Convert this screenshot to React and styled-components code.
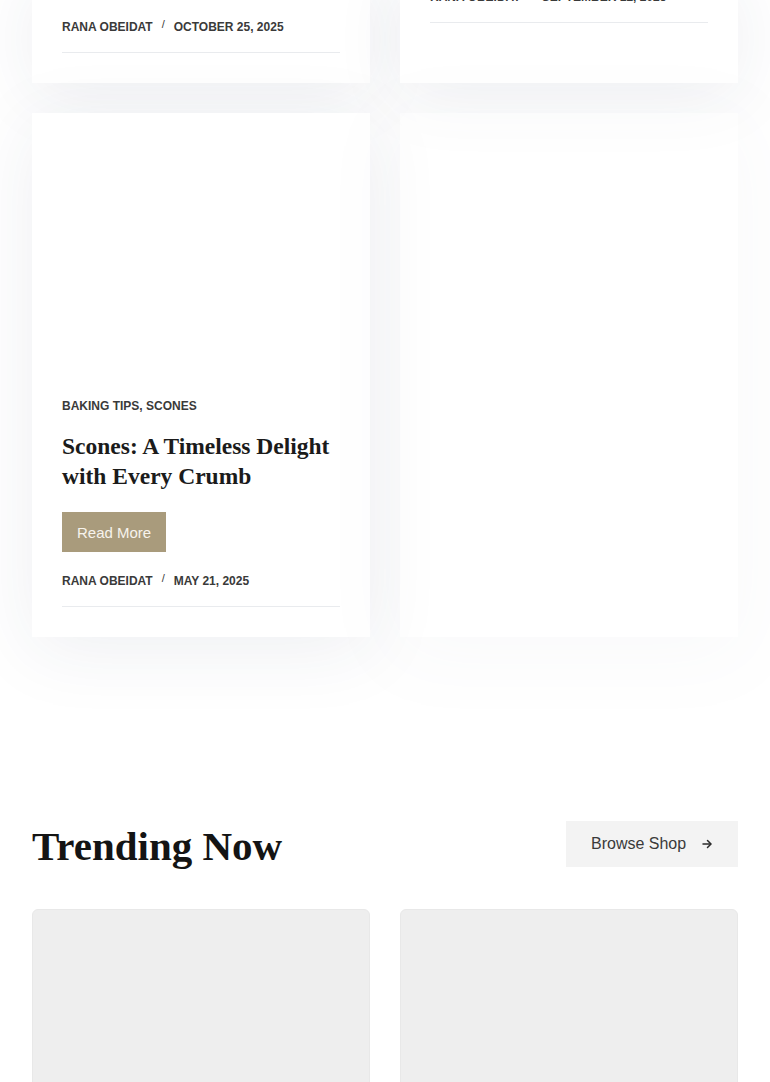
import styled, { createGlobalStyle } from "styled-components"

const Global = createGlobalStyle`
  html, body {
    margin: 0;
    padding: 0;
    background: #ffffff;
    font-family: "Liberation Sans", Arial, sans-serif;
    overflow: hidden;
  }
`

const Page = styled.div`
  width: 770px;
  height: 1082px;
  overflow: hidden;
`

const Inner = styled.div`
  padding: 0 32px;
  margin-top: -29px;
`

const Grid = styled.div`
  display: grid;
  grid-template-columns: 1fr 1fr;
  column-gap: 30px;
  row-gap: 30px;
`

const Card = styled.article`
  display: flex;
  flex-direction: column;
  background: #ffffff;
  box-shadow: 0 12px 70px rgba(40, 55, 90, 0.08);
  opacity: ${p => (p.$ghost ? 0.35 : 1)};
`

const Media = styled.div`
  height: 250px;
  background: #ffffff;
`

const Body = styled.div`
  padding: ${p => p.$top ?? 31}px 30px 30px;
  display: flex;
  flex-direction: column;
`

const Category = styled.div`
  font-size: 12px;
  line-height: 24px;
  font-weight: 700;
  color: #3a3a3a;
  text-transform: uppercase;
`

const Title = styled.h2`
  margin: 13px 0 0;
  font-family: "Liberation Serif", "Times New Roman", serif;
  font-weight: 700;
  font-size: 23.5px;
  line-height: 30px;
  color: #1b1b1b;
`

const ReadMore = styled.a`
  align-self: flex-start;
  margin-top: 21px;
  height: 40px;
  padding: 0 15px;
  display: flex;
  align-items: center;
  background: #a99b7c;
  color: #f7f3ec;
  font-size: 15px;
  text-decoration: none;
`

const Meta = styled.div`
  margin-top: ${p => p.$gap ?? 19}px;
  padding-bottom: 15px;
  border-bottom: 1px solid #e9ebee;
  display: flex;
  align-items: center;
  gap: 9px;
  font-size: 12px;
  line-height: 20px;
  font-weight: 700;
  color: #3a3a3a;
  text-transform: uppercase;
`

const Slash = styled.span`
  font-weight: 400;
  font-size: 11px;
  position: relative;
  top: -3px;
`

const Trending = styled.section`
  margin-top: 184px;
`

const Head = styled.div`
  height: 46px;
  display: flex;
  align-items: center;
  justify-content: space-between;
`

const Heading = styled.h2`
  margin: 0;
  padding-top: 4px;
  font-family: "Liberation Serif", "Times New Roman", serif;
  font-weight: 700;
  font-size: 41px;
  line-height: 46px;
  color: #141414;
`

const Browse = styled.a`
  height: 46px;
  width: 172px;
  box-sizing: border-box;
  padding: 0 25px;
  display: flex;
  align-items: center;
  justify-content: space-between;
  background: #f3f3f3;
  color: #3a3a3a;
  font-size: 16px;
  text-decoration: none;
`

const Products = styled.div`
  margin-top: 42px;
  display: grid;
  grid-template-columns: 1fr 1fr;
  column-gap: 30px;
`

const Product = styled.div`
  height: 240px;
  background: #eeeeee;
  border: 1px solid #e8e8e8;
  border-radius: 6px;
`

// the two cards above the fold are only seen from their byline down
const earlier = [
  { date: "October 25, 2025", top: 46 },
  { date: "September 12, 2025", top: 16 },
]

const post = {
  cats: "Baking Tips, Scones",
  title: "Scones: A Timeless Delight with Every Crumb",
  date: "May 21, 2025",
}

const Byline = ({ date, gap }) => (
  <Meta $gap={gap}>
    <span>Rana Obeidat</span>
    <Slash>/</Slash>
    <span>{date}</span>
  </Meta>
)

const Arrow = () => (
  <svg width="12" height="12" viewBox="0 0 24 24" fill="none" stroke="#2b2b2b" strokeWidth="3" strokeLinecap="round" strokeLinejoin="round">
    <path d="M4 12h15" />
    <path d="M13 5l7 7-7 7" />
  </svg>
)

export default function App() {
  return (
    <Page>
      <Global />
      <Inner>
        <Grid>
          {earlier.map((p, i) => (
            <Card key={i}>
              <Body $top={p.top}>
                <Byline date={p.date} gap={0} />
              </Body>
            </Card>
          ))}
          <Card>
            <Media />
            <Body>
              <Category>{post.cats}</Category>
              <Title>{post.title}</Title>
              <ReadMore href="#">Read More</ReadMore>
              <Byline date={post.date} />
            </Body>
          </Card>
          <Card $ghost />
        </Grid>
        <Trending>
          <Head>
            <Heading>Trending Now</Heading>
            <Browse href="#">
              Browse Shop
              <Arrow />
            </Browse>
          </Head>
          <Products>
            <Product />
            <Product />
          </Products>
        </Trending>
      </Inner>
    </Page>
  )
}
